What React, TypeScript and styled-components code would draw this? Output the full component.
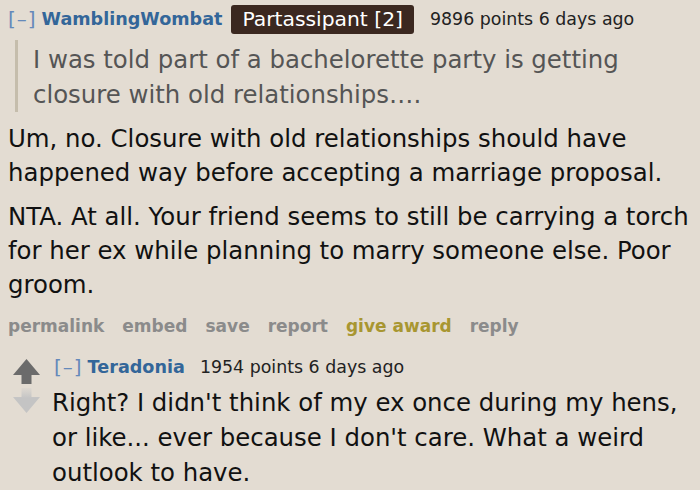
import React from "react";
import styled, { createGlobalStyle } from "styled-components";

const Global = createGlobalStyle`
  html, body { margin: 0; padding: 0; background: #e3dcd2; }
  body { font-family: "DejaVu Sans", Verdana, sans-serif; }
`;

const Page = styled.div`
  width: 700px;
  height: 490px;
  overflow: hidden;
  background: #e3dcd2;
  padding: 4px 0 0 8px;
  box-sizing: border-box;
`;

const Tagline = styled.div`
  display: flex;
  align-items: center;
  height: 30px;
  white-space: nowrap;
`;

const Toggle = styled.span`
  color: #6589ba;
  font-size: 20px;
  letter-spacing: 1px;
  margin-right: 5px;
`;

const Author = styled.span<{ $gap: number }>`
  color: #336699;
  font-weight: bold;
  font-size: 17.6px;
  margin-right: ${(p) => p.$gap}px;
`;

const Flair = styled.span`
  background: #3b2820;
  color: #ffffff;
  font-size: 20.3px;
  border-radius: 3px;
  height: 29px;
  line-height: 29px;
  padding: 0 11px;
  margin-right: 16px;
`;

const Score = styled.span`
  color: #222;
  font-size: 17.4px;
`;

const Quote = styled.blockquote`
  margin: 6px 0 0 7px;
  padding: 2px 0 0 15px;
  border-left: 3px solid #c5bdac;
  color: #555;
  font-size: 24.4px;
  line-height: 35px;
`;

const Para = styled.p`
  margin: 10px 0 0 0;
  color: #111;
  font-size: 24.4px;
  line-height: 34px;
`;

const Buttons = styled.div`
  display: flex;
  gap: 18px;
  margin-top: 11px;
  font-weight: bold;
  font-size: 17px;
  line-height: 26px;
`;

const Btn = styled.span<{ $gold?: boolean }>`
  color: ${(p) => (p.$gold ? "#a89631" : "#8b8b8b")};
`;

const Child = styled.div`
  display: flex;
  margin-top: 13px;
  padding-left: 5px;
  gap: 12px;
`;

const Votes = styled.div`
  display: flex;
  flex-direction: column;
  align-items: center;
  gap: 4px;
  width: 27px;
  padding-top: 7px;
`;

const ChildBody = styled.div`
  flex: 1;
`;

const ChildHead = styled(Tagline)`
  padding-left: 2px;
`;

const ChildText = styled.p`
  margin: 3px 0 0 0;
  color: #111;
  font-size: 24.4px;
  line-height: 35px;
`;

const UpArrow = () => (
  <svg width="27" height="25" viewBox="0 0 27 25">
    <path d="M13.5 0 L27 16 L18.5 16 L18.5 25 L8.5 25 L8.5 16 L0 16 Z" fill="#6b6b6b" />
  </svg>
);

const DownArrow = () => (
  <svg width="27" height="25" viewBox="0 0 27 25">
    <defs>
      <linearGradient id="dg" x1="0" y1="0" x2="0" y2="1">
        <stop offset="0" stopColor="#c8c8c8" stopOpacity="0.2" />
        <stop offset="0.4" stopColor="#c4c4c4" />
        <stop offset="1" stopColor="#c4c4c4" />
      </linearGradient>
    </defs>
    <path d="M13.5 25 L27 9 L18.5 9 L18.5 0 L8.5 0 L8.5 9 L0 9 Z" fill="url(#dg)" />
  </svg>
);

export default function App() {
  return (
    <Page>
      <Global />
      <Tagline>
        <Toggle>[–]</Toggle>
        <Author $gap={9}>WamblingWombat</Author>
        <Flair>Partassipant [2]</Flair>
        <Score>9896 points 6 days ago</Score>
      </Tagline>
      <Quote>
        I was told part of a bachelorette party is getting
        <br />
        closure with old relationships….
      </Quote>
      <Para>
        Um, no. Closure with old relationships should have
        <br />
        happened way before accepting a marriage proposal.
      </Para>
      <Para>
        NTA. At all. Your friend seems to still be carrying a torch
        <br />
        for her ex while planning to marry someone else. Poor
        <br />
        groom.
      </Para>
      <Buttons>
        <Btn>permalink</Btn>
        <Btn>embed</Btn>
        <Btn>save</Btn>
        <Btn>report</Btn>
        <Btn $gold>give award</Btn>
        <Btn>reply</Btn>
      </Buttons>
      <Child>
        <Votes>
          <UpArrow />
          <DownArrow />
        </Votes>
        <ChildBody>
          <ChildHead>
            <Toggle>[–]</Toggle>
            <Author $gap={15}>Teradonia</Author>
            <Score>1954 points 6 days ago</Score>
          </ChildHead>
          <ChildText>
            Right? I didn't think of my ex once during my hens,
            <br />
            or like... ever because I don't care. What a weird
            <br />
            outlook to have.
          </ChildText>
        </ChildBody>
      </Child>
    </Page>
  );
}
